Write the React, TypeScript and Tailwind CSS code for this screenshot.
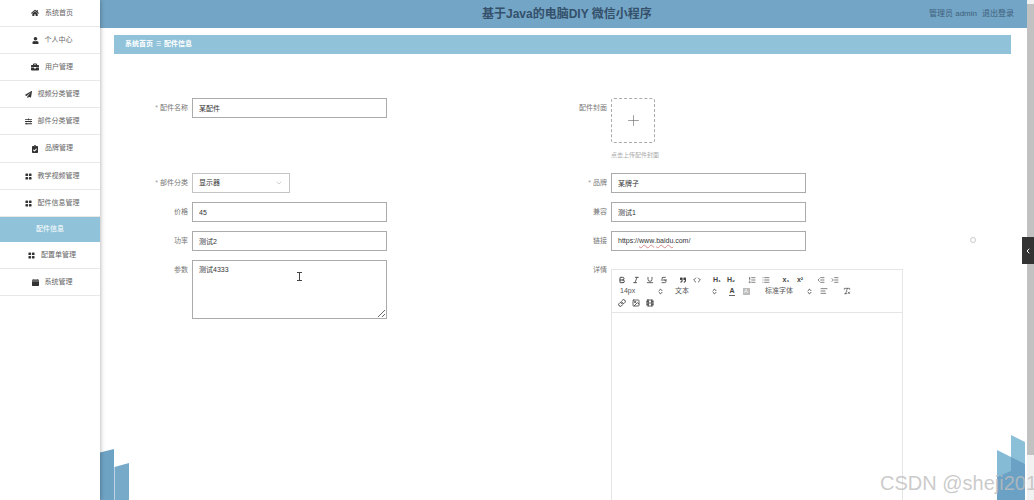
import type { ReactNode } from "react";
import {
  AlignLeft,
  Bold,
  ChevronDown,
  ChevronLeft,
  ChevronsUpDown,
  Code,
  Film,
  Image,
  Indent,
  Italic,
  Link,
  List,
  ListOrdered,
  Outdent,
  Plus,
  RemoveFormatting,
  Strikethrough,
  Underline,
} from "lucide-react";
import {
  FaBriefcase,
  FaClipboardCheck,
  FaHome,
  FaPaperPlane,
  FaQuoteRight,
  FaSlidersH,
  FaUser,
} from "react-icons/fa";
import { BsCalendarFill, BsGridFill } from "react-icons/bs";

const menu = [
  { name: "系统首页", icon: <FaHome size={8} />, height: "h-[27px]" },
  { name: "个人中心", icon: <FaUser size={7} />, height: "h-[27px]" },
  { name: "用户管理", icon: <FaBriefcase size={8} />, height: "h-[27px]" },
  { name: "视频分类管理", icon: <FaPaperPlane size={7} />, height: "h-[27px]" },
  { name: "部件分类管理", icon: <FaSlidersH size={7} />, height: "h-[27px]" },
  { name: "品牌管理", icon: <FaClipboardCheck size={8} />, height: "h-[28px]" },
  { name: "教学视频管理", icon: <BsGridFill size={7} />, height: "h-[27px]" },
  { name: "配件信息管理", icon: <BsGridFill size={7} />, height: "h-[27px]" },
  { name: "配件信息", active: true, height: "h-[25px]" },
  { name: "配置单管理", icon: <BsGridFill size={7} />, height: "h-[27px]" },
  { name: "系统管理", icon: <BsCalendarFill size={7} />, height: "h-[27px]" },
];

function Sidebar() {
  return (
    <aside className="z-10 w-[100px] shrink-0 bg-white shadow-[1px_0_4px_rgba(0,0,0,0.25)]">
      {menu.map((item) =>
        item.active ? (
          <div
            key={item.name}
            className={`flex items-center justify-center bg-[#90c3d9] text-[7px] text-white ${item.height}`}
          >
            {item.name}
          </div>
        ) : (
          <div
            key={item.name}
            className={`flex items-center justify-center gap-[6px] border-b border-[#e8e8e8] pl-[4px] text-[7px] text-[#666] ${item.height}`}
          >
            <span className="text-[#333]">{item.icon}</span>
            {item.name}
          </div>
        ),
      )}
    </aside>
  );
}

function Field({
  label,
  required,
  children,
}: {
  label: string;
  required?: boolean;
  children: ReactNode;
}) {
  return (
    <div className="flex items-start">
      <div className="flex h-[20px] w-[74px] shrink-0 items-center justify-end text-[7px] text-[#777]">
        {required && <span className="mr-[2px] text-[#999]">*</span>}
        {label}
      </div>
      <div className="ml-[4px]">{children}</div>
    </div>
  );
}

function TextInput({ value }: { value: string }) {
  return (
    <input
      readOnly
      value={value}
      className="block h-[20px] w-[195px] border border-[#ababab] bg-white px-[6px] text-[7px] text-[#333] outline-none"
    />
  );
}

function ToolCell({ children }: { children: ReactNode }) {
  return (
    <span className="flex h-[12px] w-[14px] items-center justify-center text-[#444]">
      {children}
    </span>
  );
}

function Picker({ label, width }: { label: string; width: string }) {
  return (
    <span className={`flex h-[12px] items-center justify-between pl-[5px] text-[7px] text-[#555] ${width}`}>
      {label}
      <ChevronsUpDown size={7} strokeWidth={3} className="text-[#333]" />
    </span>
  );
}

function EditorToolbar() {
  return (
    <div className="flex h-[43px] flex-col border-b border-[#e5e5e5] pl-[3px] pt-[4px]">
      <div className="flex items-center">
        <ToolCell><Bold size={8} strokeWidth={3} /></ToolCell>
        <ToolCell><Italic size={8} strokeWidth={2.5} /></ToolCell>
        <ToolCell><Underline size={8} strokeWidth={2.5} /></ToolCell>
        <ToolCell><Strikethrough size={8} strokeWidth={2.5} /></ToolCell>
        <span className="w-[5px]" />
        <ToolCell><FaQuoteRight size={6} /></ToolCell>
        <ToolCell><Code size={8} strokeWidth={2.5} /></ToolCell>
        <span className="w-[6px]" />
        <ToolCell><span className="text-[7px] font-bold">H₁</span></ToolCell>
        <ToolCell><span className="text-[7px] font-bold">H₂</span></ToolCell>
        <span className="w-[7px]" />
        <ToolCell><ListOrdered size={8} /></ToolCell>
        <ToolCell><List size={8} /></ToolCell>
        <span className="w-[6px]" />
        <ToolCell><span className="text-[7px] font-bold">x₁</span></ToolCell>
        <ToolCell><span className="text-[7px] font-bold">x²</span></ToolCell>
        <span className="w-[7px]" />
        <ToolCell><Outdent size={8} /></ToolCell>
        <ToolCell><Indent size={8} /></ToolCell>
      </div>
      <div className="-mt-[1px] flex items-center">
        <Picker label="14px" width="w-[49px]" />
        <span className="w-[6px]" />
        <Picker label="文本" width="w-[48px]" />
        <span className="w-[7px]" />
        <ToolCell><span className="border-b border-[#666] text-[7px] leading-[8px] font-bold">A</span></ToolCell>
        <ToolCell><span className="flex h-[7px] w-[7px] items-center justify-center bg-[#bbb] text-[6px] leading-none text-white">A</span></ToolCell>
        <span className="w-[7px]" />
        <Picker label="标准字体" width="w-[53px]" />
        <span className="w-[4px]" />
        <ToolCell><AlignLeft size={8} /></ToolCell>
        <span className="w-[9px]" />
        <ToolCell><RemoveFormatting size={8} /></ToolCell>
      </div>
      <div className="flex items-center">
        <ToolCell><Link size={8} strokeWidth={3} /></ToolCell>
        <ToolCell><Image size={8} strokeWidth={2.5} /></ToolCell>
        <ToolCell><Film size={8} strokeWidth={2.5} /></ToolCell>
      </div>
    </div>
  );
}

function LeftColumn() {
  return (
    <div className="flex w-[419px] shrink-0 flex-col gap-[9px]">
      <div className="mb-[46px]">
        <Field label="配件名称" required>
          <TextInput value="某配件" />
        </Field>
      </div>
      <Field label="部件分类" required>
        <div className="flex h-[20px] w-[98px] items-center justify-between border border-[#c4c4c4] px-[6px] text-[7px] text-[#333]">
          显示器
          <ChevronDown size={8} className="text-[#bbb]" />
        </div>
      </Field>
      <Field label="价格">
        <TextInput value="45" />
      </Field>
      <Field label="功率">
        <TextInput value="测试2" />
      </Field>
      <Field label="参数">
        <textarea
          readOnly
          value="测试4333"
          className="block h-[59px] w-[195px] border border-[#ababab] bg-white px-[6px] py-[4px] text-[7px] text-[#333] outline-none"
        />
      </Field>
    </div>
  );
}

function RightColumn() {
  return (
    <div className="flex flex-col gap-[9px]">
      <div className="mb-[1px] h-[65px]">
        <Field label="配件封面">
          <div className="flex h-[45px] w-[44px] items-center justify-center rounded-[3px] border border-dashed border-[#aaa] text-[#777]">
            <Plus size={17} strokeWidth={1} />
          </div>
          <p className="mt-[8px] text-[6px] leading-[8px] text-[#aaa]">点击上传配件封面</p>
        </Field>
      </div>
      <Field label="品牌" required>
        <TextInput value="某牌子" />
      </Field>
      <Field label="兼容">
        <TextInput value="测试1" />
      </Field>
      <Field label="链接">
        <div className="flex h-[20px] w-[195px] items-center border border-[#ababab] px-[6px] text-[7px] text-[#333]">
          https://
          <span className="underline decoration-[#d98a8a] decoration-wavy">www</span>.
          <span className="underline decoration-[#d98a8a] decoration-wavy">baidu</span>.com/
        </div>
      </Field>
      <Field label="详情">
        <div className="mt-[9px] h-[240px] w-[292px] border border-[#e5e5e5]">
          <EditorToolbar />
        </div>
      </Field>
    </div>
  );
}

export default function App() {
  return (
    <div className="relative flex h-[500px] w-[1034px] overflow-hidden bg-white font-['Liberation_Sans','Noto_Sans_CJK_SC',sans-serif]">
      <Sidebar />

      <main className="w-[927px] shrink-0">
        <header className="flex h-[28px] items-center bg-[#73a5c6] pr-[13px]">
          <h1 className="ml-[382px] text-[12px] font-bold text-[#34506a]">
            基于Java的电脑DIY 微信小程序
          </h1>
          <div className="ml-auto flex gap-[5px] text-[8px] text-[#3f5f7a]">
            <span>管理员 admin</span>
            <span>退出登录</span>
          </div>
        </header>

        <nav className="mt-[7px] ml-[14px] flex h-[19px] w-[897px] items-center gap-[3px] bg-[#90c3d9] pl-[11px] text-[7px] font-bold text-white">
          <span>系统首页</span>
          <span className="text-[6px] font-normal">☰</span>
          <span>配件信息</span>
        </nav>

        <form className="mt-[44px] ml-[14px] flex">
          <LeftColumn />
          <RightColumn />
        </form>
      </main>

      {/* page scrollbar */}
      <div className="flex w-[7px] shrink-0 flex-col bg-[#f1f1f1]">
        <div className="mt-[4px] h-[451px] bg-[#c1c1c1]" />
      </div>

      {/* skyline at the bottom corners */}
      <svg className="absolute bottom-0 left-[100px]" width="29" height="51" viewBox="0 0 29 51">
        <path d="M0 3.5 14 0V51H0Z" fill="#6fa3c4" />
        <path d="M14.5 18 29 14V51H14.5Z" fill="#77aac9" />
      </svg>
      <svg className="absolute bottom-0 left-[997px]" width="28" height="65" viewBox="0 0 28 65">
        <path d="M14 0 28 7V65H14Z" fill="#8cc0d8" />
        <path d="M0 15 14 22V65H0Z" fill="#85bbd5" />
        <path d="M14 22 28 29V65H0V45L0 42 14 36Z" fill="#6ba1c4" />
      </svg>

      {/* side drawer handle */}
      <div className="absolute top-[237px] right-0 flex h-[27px] w-[12px] items-center justify-center bg-[#333] text-white">
        <ChevronLeft size={8} strokeWidth={3} />
      </div>
      <div className="absolute top-[237px] left-[970px] h-[6px] w-[6px] rounded-full border border-[#ccc]" />

      {/* text caret over the textarea */}
      <svg className="absolute top-[272px] left-[296px]" width="7" height="9" viewBox="0 0 7 9" fill="none" stroke="#444">
        <path d="M1 .5h5M3.5.5v8M1 8.5h5" />
      </svg>

      <span className="absolute top-[471px] left-[880px] text-[20px] leading-[24px] whitespace-nowrap text-[#bdbdbd]/80">
        CSDN @sheji201
      </span>
    </div>
  );
}
